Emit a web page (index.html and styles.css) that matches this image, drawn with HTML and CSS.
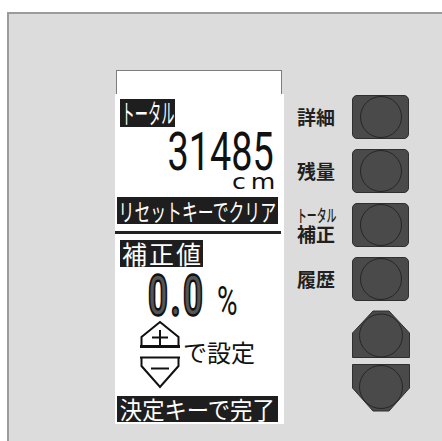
FILE: index.html
```html
<!DOCTYPE html>
<html lang="ja">
<head>
<meta charset="utf-8">
<link rel="stylesheet" href="styles.css">
</head>
<body>
<div class="panel">
  <div class="lcd">
    <div class="lcd-cap"></div>
    <div class="lcd-screen">
      <div class="tag tag-total"><span>トータル</span></div>
      <div class="big-num"><span>31485</span></div>
      <div class="unit"><span>cm</span></div>
      <div class="bar bar-reset"><span>リセットキーでクリア</span></div>
      <div class="rule"></div>
      <div class="tag tag-corr">補正値</div>
      <div class="pct"><div class="pct-num"><span>0.0</span></div><span class="pct-sign">%</span></div>
      <div class="set-row">
        <svg class="updown" viewBox="0 0 44 70">
          <path d="M2.5 26 V17 L21 2 L39.5 17 V26" fill="none" stroke="#111" stroke-width="2"/>
          <path d="M1 26.5 H41" stroke="#111" stroke-width="3"/>
          <path d="M21 10 V25 M13 17.5 H29" stroke="#111" stroke-width="2"/>
          <path d="M1 37.5 H41" stroke="#111" stroke-width="2"/>
          <path d="M2.5 37.5 V46 L21 67 L39.5 46 V37.5" fill="none" stroke="#111" stroke-width="2"/>
          <path d="M12 48.5 H30" stroke="#111" stroke-width="2"/>
        </svg>
        <span class="set-text">で設定</span>
      </div>
      <div class="bar bar-done"><span>決定キーで完了</span></div>
    </div>
  </div>
  <div class="keys">
    <div class="key-row">
      <div class="key-label">詳細</div>
      <div class="key"><div class="key-circle"></div></div>
    </div>
    <div class="key-row">
      <div class="key-label">残量</div>
      <div class="key"><div class="key-circle"></div></div>
    </div>
    <div class="key-row">
      <div class="key-label"><span class="key-label-small">トータル</span>補正</div>
      <div class="key"><div class="key-circle"></div></div>
    </div>
    <div class="key-row">
      <div class="key-label">履歴</div>
      <div class="key"><div class="key-circle"></div></div>
    </div>
    <div class="hex-row hex-up">
      <svg class="hex" viewBox="0 0 58 48">
        <polygon points="21,1 37,1 57.5,23 57.5,47.5 0.5,47.5 0.5,23" fill="#4a4a4a" stroke="#2f2f2f" stroke-width="1"/>
        <circle cx="29" cy="25.5" r="21.5" fill="none" stroke="#262626" stroke-width="1"/>
      </svg>
    </div>
    <div class="hex-row hex-down">
      <svg class="hex" viewBox="0 0 58 48">
        <polygon points="0.5,0.5 57.5,0.5 57.5,24 37,47 21,47 0.5,24" fill="#4a4a4a" stroke="#2f2f2f" stroke-width="1"/>
        <circle cx="29" cy="23" r="21.5" fill="none" stroke="#262626" stroke-width="1"/>
      </svg>
    </div>
  </div>
</div>
</body>
</html>
```
FILE: styles.css
```css
html, body {
  margin: 0;
  background: #fff;
  font-family: "Noto Sans CJK JP", "Noto Sans", sans-serif;
  color: #1a1a1a;
}

.panel {
  margin: 12px 0 0 7px;
  height: 429px;
  box-sizing: border-box;
  border-top: 2px solid #9b9b9b;
  border-left: 2px solid #9b9b9b;
  background: #dcdcdc;
  display: flex;
  align-items: flex-start;
  padding: 56px 0 0 106px;
}

.lcd {
  width: 169px;
  display: flex;
  flex-direction: column;
}

.lcd-cap {
  height: 24px;
  margin: 0 2px 0 1px;
  border: 1px solid #7d7d7d;
  border-bottom: 0;
  background: #fff;
  box-sizing: border-box;
}

.lcd-screen {
  height: 330px;
  background: #fff;
  display: flex;
  flex-direction: column;
  align-items: flex-start;
}

.tag {
  background: #1e1e1e;
  color: #fff;
  display: flex;
  align-items: center;
  justify-content: center;
  white-space: nowrap;
  box-sizing: border-box;
}

.tag-total {
  margin: 5px 0 0 5px;
  width: 55px;
  height: 28px;
  font-size: 27px;
  line-height: 28px;
}

.tag-total span {
  display: inline-block;
  margin: 0 -27px;
  transform: scaleX(0.49);
}

.big-num {
  align-self: stretch;
  text-align: right;
  padding-right: 10px;
  margin-top: 1.5px;
  height: 46px;
  line-height: 46px;
  font-family: Roboto, sans-serif;
  font-size: 54px;
  color: #111;
}

.big-num span {
  display: inline-block;
  transform: scaleX(0.7);
  transform-origin: right center;
}

.unit {
  align-self: stretch;
  text-align: right;
  padding-right: 4px;
  height: 14px;
  line-height: 14px;
  font-family: "DejaVu Sans", sans-serif;
  font-size: 21px;
  color: #111;
}

.unit span {
  display: inline-block;
  letter-spacing: 4px;
  transform: scaleX(1.2);
  transform-origin: right center;
}

.bar {
  margin-left: 2px;
  width: 161px;
  background: #1e1e1e;
  color: #fff;
  display: flex;
  align-items: center;
  justify-content: center;
  white-space: nowrap;
}

.bar span {
  display: inline-block;
}

.bar-reset {
  margin-top: 8px;
  height: 27px;
  font-size: 24px;
  line-height: 27px;
}

.bar-reset span {
  margin: 0 -41px;
  transform: scaleX(0.66);
}

.rule {
  margin-top: 7px;
  width: 166px;
  height: 3px;
  background: #222;
}

.tag-corr {
  margin: 6px 0 0 5px;
  width: 83px;
  height: 27px;
  font-size: 25px;
  line-height: 27px;
  letter-spacing: 2px;
  padding-left: 2px;
}

.pct {
  margin-top: 9px;
  padding-left: 33px;
  height: 41px;
  line-height: 40px;
  display: flex;
  align-items: baseline;
}

.pct-num {
  width: 62px;
  font-family: Roboto, sans-serif;
  font-weight: 700;
  font-size: 56px;
  white-space: nowrap;
}

.pct-num span {
  display: inline-block;
  transform: scaleX(0.62);
  transform-origin: left center;
  letter-spacing: 4px;
  color: #555;
  -webkit-text-stroke: 2.5px #111;
}

.pct-sign {
  margin-left: 7px;
  font-family: Roboto, sans-serif;
  font-weight: 400;
  font-size: 40px;
  display: inline-block;
  transform: scaleX(0.7);
  transform-origin: left center;
  color: #111;
}

.set-row {
  margin: 3px 0 0 24px;
  display: flex;
  align-items: flex-start;
}

.updown {
  width: 44px;
  height: 70px;
  display: block;
}

.set-text {
  margin-top: 20px;
  font-size: 24px;
  line-height: 24px;
  color: #111;
}

.bar-done {
  margin-top: 6px;
  height: 26px;
  font-size: 24px;
  line-height: 26px;
}

.bar-done span {
  margin: 0 -6px;
  transform: scaleX(0.93);
}

.keys {
  margin: 25px 0 0 13px;
  display: flex;
  flex-direction: column;
}

.key-row {
  display: flex;
  align-items: center;
  height: 44px;
}

.key-row + .key-row {
  margin-top: 10px;
}

.key-label {
  width: 55px;
  font-size: 19px;
  font-weight: 700;
  line-height: 20px;
  color: #231f20;
}

.key-label-small {
  display: block;
  width: 38px;
  font-size: 17px;
  line-height: 18px;
  font-weight: 500;
  transform: scaleX(0.58);
  transform-origin: left center;
  white-space: nowrap;
}

.key {
  width: 57px;
  height: 44px;
  box-sizing: border-box;
  background: #4a4a4a;
  border: 1px solid #2f2f2f;
  border-radius: 5px;
  display: flex;
  align-items: center;
  justify-content: center;
}

.key-circle {
  width: 42px;
  height: 42px;
  flex: none;
  border-radius: 50%;
  border: 1px solid #262626;
  box-sizing: border-box;
}

.hex-row {
  padding-left: 55px;
}

.hex {
  display: block;
  width: 58px;
  height: 48px;
}

.hex-up {
  margin-top: 9px;
}

.hex-down {
  margin-top: 6px;
}
```
